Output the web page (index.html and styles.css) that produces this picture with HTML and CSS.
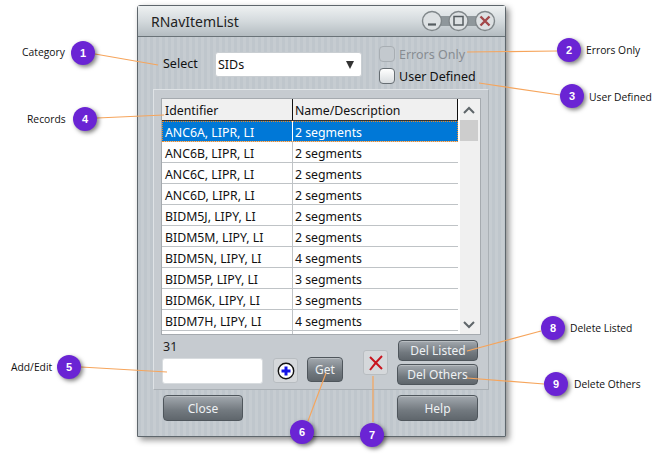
FILE: index.html
```html
<!DOCTYPE html>
<html lang="en">
<head>
<meta charset="utf-8">
<title>RNavItemList</title>
<link rel="stylesheet" href="styles.css">
</head>
<body>
<div class="window">
  <header class="titlebar">
    <span class="title">RNavItemList</span>
    <div class="winbtns">
      <svg width="76" height="24" viewBox="0 0 76 24">
        <path d="M14 7h48v10H14z" fill="#8f979b"/>
        <g fill="#dde1e3" stroke="#80878a" stroke-width="1.400">
          <circle cx="11" cy="12" r="9.500"/><circle cx="37.500" cy="12" r="9.500"/><circle cx="64" cy="12" r="9.500"/>
        </g>
        <path d="M7 15.500h8" stroke="#555c60" stroke-width="2.200"/>
        <rect x="33" y="7.500" width="9" height="8.500" fill="none" stroke="#555c60" stroke-width="1.500"/>
        <path d="M59.500 7.500l9 9M68.500 7.500l-9 9" stroke="#a3484a" stroke-width="2.400"/>
      </svg>
    </div>
  </header>
  <div class="content">
    <div class="toprow">
      <span class="selectlabel">Select</span>
      <div class="select"><span>SIDs</span><span class="caret"></span></div>
      <div class="checks">
        <label class="check disabled"><span class="box"></span>Errors Only</label>
        <label class="check"><span class="box"></span>User Defined</label>
      </div>
    </div>
    <section class="panel">
      <div class="grid">
        <div class="list">
          <div class="row head"><div class="c1">Identifier</div><div class="c2">Name/Description</div></div>
          <div class="row sel"><div class="c1">ANC6A, LIPR, LI</div><div class="c2">2 segments</div></div>
          <div class="row"><div class="c1">ANC6B, LIPR, LI</div><div class="c2">2 segments</div></div>
          <div class="row"><div class="c1">ANC6C, LIPR, LI</div><div class="c2">2 segments</div></div>
          <div class="row"><div class="c1">ANC6D, LIPR, LI</div><div class="c2">2 segments</div></div>
          <div class="row"><div class="c1">BIDM5J, LIPY, LI</div><div class="c2">2 segments</div></div>
          <div class="row"><div class="c1">BIDM5M, LIPY, LI</div><div class="c2">2 segments</div></div>
          <div class="row"><div class="c1">BIDM5N, LIPY, LI</div><div class="c2">4 segments</div></div>
          <div class="row"><div class="c1">BIDM5P, LIPY, LI</div><div class="c2">3 segments</div></div>
          <div class="row"><div class="c1">BIDM6K, LIPY, LI</div><div class="c2">3 segments</div></div>
          <div class="row"><div class="c1">BIDM7H, LIPY, LI</div><div class="c2">4 segments</div></div>
          <div class="row"><div class="c1"></div><div class="c2"></div></div>
        </div>
        <div class="scroll">
          <svg class="arrow" width="12" height="8" viewBox="0 0 12 8"><path d="M1 7l5-5 5 5" fill="none" stroke="#5f666a" stroke-width="2"/></svg>
          <div class="thumb"></div>
          <svg class="arrow" width="12" height="8" viewBox="0 0 12 8"><path d="M1 1l5 5 5-5" fill="none" stroke="#5f666a" stroke-width="2"/></svg>
        </div>
      </div>
      <div class="tools">
        <div class="addedit">
          <div class="count">31</div>
          <div class="inputrow">
            <div class="input"></div>
            <button class="iconbtn plus" type="button">
              <svg width="18" height="18" viewBox="0 0 18 18"><circle cx="9" cy="9" r="7.700" fill="#fff" stroke="#111" stroke-width="1.400"/><path d="M9 4.500v9M4.500 9h9" stroke="#1414e6" stroke-width="3"/></svg>
            </button>
            <button class="btn get" type="button">Get</button>
          </div>
        </div>
        <button class="iconbtn del" type="button">
          <svg width="18" height="18" viewBox="0 0 18 18"><path d="M3 3Q8 8 15 15M15 2Q9 8 3 16" fill="none" stroke="#c8141e" stroke-width="2"/></svg>
        </button>
        <div class="delcol">
          <button class="btn dl" type="button">Del Listed</button>
          <button class="btn dk" type="button">Del Others</button>
        </div>
      </div>
    </section>
    <div class="footer">
      <button class="btn close" type="button">Close</button>
      <button class="btn help" type="button">Help</button>
    </div>
  </div>
</div>

<svg class="leaders" width="668" height="468" viewBox="0 0 668 468">
  <g stroke="#f6a55c" stroke-width="1.200" fill="none">
    <path d="M95 54L158 65"/>
    <path d="M467 52L557 51"/>
    <path d="M479 83L560 95"/>
    <path d="M97 118L164 115"/>
    <path d="M81 367L167 372"/>
    <path d="M308 421L326 373"/>
    <path d="M373 422V376"/>
    <path d="M467 351L541 331"/>
    <path d="M467 378L544 384"/>
  </g>
</svg>
<div class="callout b1">1</div><div class="tag t1">Category</div>
<div class="callout b2">2</div><div class="tag t2">Errors Only</div>
<div class="callout b3">3</div><div class="tag t3">User Defined</div>
<div class="callout b4">4</div><div class="tag t4">Records</div>
<div class="callout b5">5</div><div class="tag t5">Add/Edit</div>
<div class="callout b6">6</div>
<div class="callout b7">7</div>
<div class="callout b8">8</div><div class="tag t8">Delete Listed</div>
<div class="callout b9">9</div><div class="tag t9">Delete Others</div>
</body>
</html>
```
FILE: styles.css
```css
* { box-sizing: border-box; }
html, body { margin: 0; height: 100%; background: #fff; overflow: hidden; }
body { padding: 5px 0 0 137px; font-family: "Noto Sans", "Open Sans", sans-serif; color: #111; position: relative; }

.window {
  width: 369px; height: 432px;
  border: 1px solid #5e666c;
  border-radius: 3px 3px 0 0;
  box-shadow: 3px 3px 6px rgba(0,0,0,.45);
  background: repeating-linear-gradient(90deg, #bfc6cc 0, #bfc6cc 3px, #c6ccd1 3px, #c6ccd1 6px);
  display: flex; flex-direction: column;
}
.titlebar {
  height: 31px; flex: none;
  background: linear-gradient(#eef1f2, #d4dadd 50%, #b4bcc1);
  border-bottom: 1px solid #6a7378;
  display: flex; align-items: center; justify-content: space-between;
  padding: 0 8px 0 13px;
}
.title { font-size: 14px; color: #222; }
.winbtns { display: flex; }

.content { flex: 1; display: flex; flex-direction: column; padding: 0 16px 0 15px; }

.toprow { height: 52px; display: flex; align-items: flex-start; flex: none; }
.selectlabel { font-size: 12.500px; margin: 18px 0 0 10px; width: 52px; }
.select {
  width: 147px; height: 25px; margin-top: 15px;
  background: #fff; border: 1px solid #c9ced2; border-radius: 3px;
  display: flex; align-items: center; justify-content: space-between;
  padding: 0 7px 0 2px; font-size: 12.500px;
}
.caret { width: 0; height: 0; border: 4.500px solid transparent; border-top: 8px solid #333; border-bottom: 0; }
.checks { margin: 9px 0 0 17px; display: flex; flex-direction: column; gap: 6px; }
.check { display: flex; align-items: center; gap: 4px; font-size: 12.500px; height: 16px; }
.check.disabled { color: #878c92; }
.box { width: 16px; height: 16px; border: 1px solid #666d72; border-radius: 4px; background: linear-gradient(#fff, #d8dcdf); }
.disabled .box { border-color: #a8aeb3; background: #c3c9ce; }

.panel {
  width: 336px; height: 301px; flex: none;
  background: #c6cbd0;
  border: 1px solid #dfe3e6; border-right-color: #aab0b5; border-bottom-color: #aab0b5;
  padding: 8px 7px 0 7px;
  display: flex; flex-direction: column;
}
.grid { display: flex; height: 237px; flex: none; background: #fff; border: 1px solid #a5aaaf; overflow: hidden; }
.list { width: 296px; flex: none; overflow: hidden; }
.row { display: flex; height: 21px; font-size: 12.300px; line-height: 24px; border-bottom: 1px solid #bfc3c6; color: #111; }
.c1 { width: 131px; padding-left: 3px; border-right: 1px solid #bfc3c6; white-space: nowrap; }
.c2 { flex: 1; padding-left: 2px; white-space: nowrap; }
.head { background: #f0f0f0; border-bottom: 1px solid #333; height: 22px; }
.head .c1 { border-right: 1px solid #111; }
.head .c2 { border-right: 1px solid #111; }
.sel { background: #0078d7; color: #fff; outline: 1px dotted #f08a24; outline-offset: -1px; }
.sel .c1 { border-right-color: #fff; }
.scroll { flex: 1; background: #f0f0f0; display: flex; flex-direction: column; align-items: center; border-left: 2px solid #fff; padding-right: 2px; }
.arrow { flex: none; margin-top: 7px; }
.thumb { width: 100%; height: 21px; margin-top: 6px; background: #cdcdcd; }
.scroll .arrow:last-child { margin-top: auto; margin-bottom: 5px; }

.tools { flex: 1; display: flex; align-items: flex-start; }
.addedit { width: 202px; flex: none; }
.count { font-size: 12.500px; margin-top: 2px; padding-left: 2px; height: 21px; line-height: 20px; color: #222; }
.inputrow { display: flex; align-items: flex-start; padding-left: 1px; }
.input { width: 101px; height: 26px; background: #fff; border: 1px solid #d8dcdf; border-radius: 3px; margin-right: 10px; }
.iconbtn {
  width: 25px; height: 25px; padding: 0; flex: none;
  display: flex; align-items: center; justify-content: center;
  background: #d5d8db; border: 1px solid #b8bdc1; border-radius: 3px;
}
.btn {
  font-family: inherit; color: #eef1f3; font-size: 12px; padding: 0;
  border: 1px solid #4f565c; border-radius: 4px;
  background: linear-gradient(#a3a9af, #72797f 60%, #5f666c);
  box-shadow: inset 0 1px 0 rgba(255,255,255,.25);
}
.get { width: 36px; height: 25px; margin: -1px 0 0 9px; }
.del { margin: 15px 9px 0 0; }
.delcol { display: flex; flex-direction: column; align-items: flex-end; width: 81px; margin-top: 5px; gap: 3px; }
.dl { width: 80px; height: 21px; }
.dk { width: 81px; height: 21px; }

.footer { display: flex; justify-content: space-between; padding: 5px 11px 0 10px; }
.close { width: 80px; height: 26px; }
.help { width: 81px; height: 26px; }

.leaders { position: absolute; left: 0; top: 0; pointer-events: none; }
.callout {
  position: absolute; width: 24px; height: 24px; border-radius: 50%;
  background: #6a24d4; color: #fff;
  font: bold 11px/24px "Liberation Sans", sans-serif; text-align: center;
  box-shadow: 2px 2px 4px rgba(0,0,0,.5);
}
.tag { position: absolute; font: 10.300px/14px "Open Sans", sans-serif; color: #111; white-space: nowrap; }
.b1 { left: 71px; top: 41px; } .t1 { left: 22px; top: 45px; }
.b2 { left: 557px; top: 38px; } .t2 { left: 586px; top: 43px; }
.b3 { left: 560px; top: 84px; } .t3 { left: 589px; top: 90px; }
.b4 { left: 73px; top: 107px; } .t4 { left: 27px; top: 112px; }
.b5 { left: 57px; top: 355px; } .t5 { left: 11px; top: 360px; }
.b6 { left: 290px; top: 420px; }
.b7 { left: 360px; top: 423px; }
.b8 { left: 541px; top: 316px; } .t8 { left: 570px; top: 321px; }
.b9 { left: 544px; top: 372px; } .t9 { left: 574px; top: 377px; }
```
